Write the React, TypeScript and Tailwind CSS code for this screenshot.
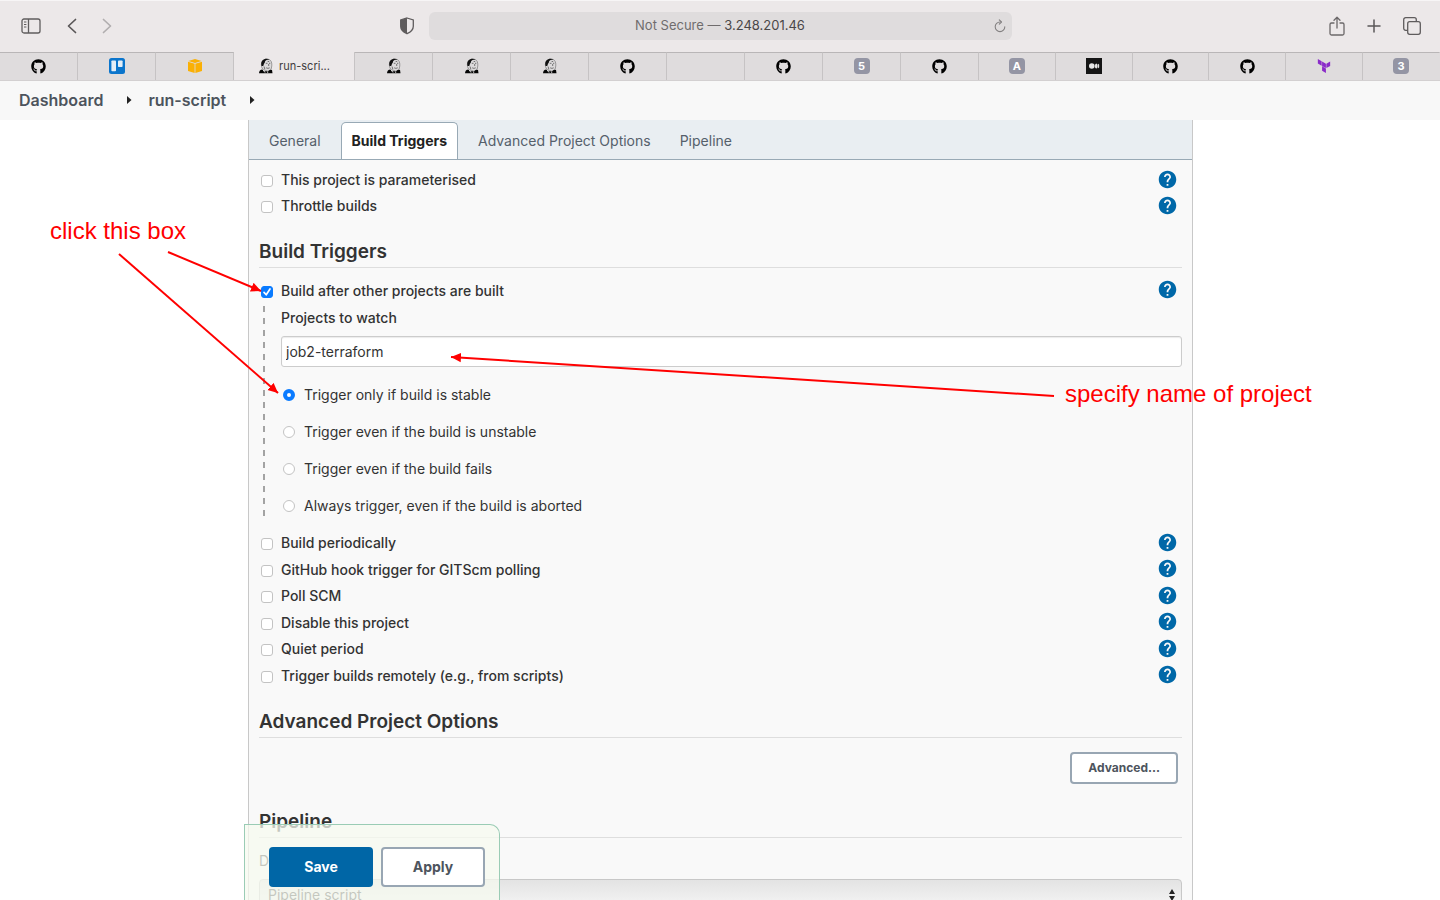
import type { ReactNode } from 'react';
import { FaGithub } from 'react-icons/fa';
import { MdHelp } from 'react-icons/md';
import { SiTerraform } from 'react-icons/si';

/* ---------- Browser icons ---------- */

function SidebarIcon() {
  return (
    <svg width="20" height="16" viewBox="0 0 20 16" fill="none" stroke="#5f5c5d" strokeWidth="1.3">
      <rect x="1" y="1" width="18" height="14" rx="2" />
      <path d="M7.5 1v14" />
      <path d="M3 4h2.4M3 6.5h2.4M3 9h2.4" strokeWidth="1" />
    </svg>
  );
}

function Chevron({ forward = false }: { forward?: boolean }) {
  return (
    <svg width="10" height="16" viewBox="0 0 10 16" fill="none" stroke={forward ? '#b1aeaf' : '#5a5758'} strokeWidth="1.7" strokeLinecap="round" strokeLinejoin="round">
      <path d={forward ? 'M1.5 1.5 8.5 8l-7 6.5' : 'M8.5 1.5 1.5 8l7 6.5'} />
    </svg>
  );
}

function ShieldIcon() {
  return (
    <svg width="16" height="18" viewBox="0 0 16 18" fill="none">
      <path d="M8 1 14.3 3v6.3c0 3.6-2.8 5.9-6.3 7.4-3.5-1.5-6.3-3.8-6.3-7.4V3L8 1Z" stroke="#5f5c5d" strokeWidth="1.3" />
      <path d="M8 1 1.7 3v6.3c0 3.6 2.8 5.9 6.3 7.4V1Z" fill="#5f5c5d" />
    </svg>
  );
}

function ReloadIcon() {
  return (
    <svg width="12" height="14" viewBox="0 0 12 14" fill="none" stroke="#838081" strokeWidth="1.1" strokeLinecap="round" strokeLinejoin="round">
      <path d="M6.8 3H6a4.8 4.8 0 1 0 4.8 4.8" />
      <path d="M5.3.8 7.5 3 5.3 5.2" />
    </svg>
  );
}

function ShareIcon() {
  return (
    <svg width="16" height="20" viewBox="0 0 16 20" fill="none" stroke="#6b6869" strokeWidth="1.3" strokeLinecap="round" strokeLinejoin="round">
      <path d="M5 7H2.5A1.5 1.5 0 0 0 1 8.5v9A1.5 1.5 0 0 0 2.5 19h11a1.5 1.5 0 0 0 1.5-1.5v-9A1.5 1.5 0 0 0 13.5 7H11" />
      <path d="M8 12V1.5M5 4.3l3-3 3 3" />
    </svg>
  );
}

function PlusIcon() {
  return (
    <svg width="14" height="14" viewBox="0 0 14 14" fill="none" stroke="#5a5758" strokeWidth="1.5" strokeLinecap="round">
      <path d="M7 1v12M1 7h12" />
    </svg>
  );
}

function OverviewIcon() {
  return (
    <svg width="18" height="18" viewBox="0 0 18 18" fill="none" stroke="#5f5c5d" strokeWidth="1.3">
      <rect x="4.7" y="4.7" width="12.6" height="12.6" rx="2" />
      <path d="M4.7 13.3h-2a2 2 0 0 1-2-2V2.7a2 2 0 0 1 2-2h8.6a2 2 0 0 1 2 2v2" />
    </svg>
  );
}

/* ---------- Favicons ---------- */

function Trello() {
  return (
    <svg width="16" height="16" viewBox="0 0 16 16">
      <rect width="16" height="16" rx="2.5" fill="#0b75cc" />
      <rect x="2.4" y="2.4" width="4.6" height="10.8" rx="0.8" fill="#e4eef7" />
      <rect x="9" y="2.4" width="4.6" height="6.6" rx="0.8" fill="#e4eef7" />
    </svg>
  );
}

function Cube() {
  return (
    <svg width="16" height="16" viewBox="0 0 16 16" fill="#fab005">
      <path d="M8 1 14.6 3 8 5 1.4 3Z" />
      <path d="M1 3.7 7.6 5.7V15L1 13Z" />
      <path d="M15 3.7 8.4 5.7V15l6.6-2Z" />
    </svg>
  );
}

function Jenkins() {
  return (
    <svg width="16" height="16" viewBox="0 0 16 16">
      <path d="M4.5 11C2.8 8 3 4.5 5 2.6 7.5.4 12 .7 13.2 3.5c.9 2 .8 5-.1 7.5l-2.800 2.500Z" fill="#dcdadb" stroke="#666" strokeWidth=".6" />
      <path d="M3.6 8C2.700 5 3.600 2 6.300 1.200c2-.7 4-.4 5.200.6-2-.2-3.400.2-4.200 1.200-.5.700-.2 1.600-.9 2.200-.8.600-.5 1.800-1.200 2.800Z" fill="#111" />
      <path d="M7.800 5.300h1.700M11 5.300h1.300M10.700 6v2M8.200 9.800c1.200.7 2.400.6 3.500 0M6 8.500l.8 2.500M9.600 3.400l1.600.2" fill="none" stroke="#444" strokeWidth=".7" />
      <path d="M1 15.300c.2-2.300 1.200-3.600 3.400-3.800l2.400 1.700 1.900.1 1.300.3 1-1.400 3-.4.5 3.500Z" fill="#050505" />
      <path d="M4.800 11.500 7 14.500M9.700 13.600v1.300" stroke="#eee" strokeWidth=".9" />
    </svg>
  );
}

function Medium() {
  return (
    <svg width="16" height="16" viewBox="0 0 16 16">
      <rect width="16" height="16" fill="#151515" />
      <circle cx="5.8" cy="8" r="2.8" fill="#e8e8e8" />
      <ellipse cx="10.3" cy="8" rx="1.4" ry="2.6" fill="#e8e8e8" />
      <ellipse cx="12.6" cy="8" rx=".6" ry="2.3" fill="#e8e8e8" />
    </svg>
  );
}

function Letter({ children }: { children: string }) {
  return (
    <span className="flex size-4 items-center justify-center rounded bg-[#9495a4] text-[11px] leading-none font-bold text-white">
      {children}
    </span>
  );
}

const github = <FaGithub size={15} color="#000" />;

const leadingTabs: ReactNode[] = [github, <Trello />, <Cube />];
const middleTabs: ReactNode[] = [
  <Jenkins />,
  <Jenkins />,
  <Jenkins />,
  github,
  null,
  github,
  <Letter>5</Letter>,
  github,
];
const trailingTabs: ReactNode[] = [
  <Letter>A</Letter>,
  <Medium />,
  github,
  github,
  <SiTerraform size={14} color="#8a2bc9" />,
  <Letter>3</Letter>,
];

const tabBase = 'flex items-center justify-center border-t border-r border-t-[#b9b6b7] border-r-[#c6c3c4] bg-[#dfdcdd] pb-px';

function Browser() {
  return (
    <header className="shrink-0">
      <div className="flex h-13 items-center border-t border-[#f7f5f6] bg-[#ece8e9] pb-px">
        <div className="flex flex-1 items-center pr-[14px] pl-[21px]">
          <button aria-label="Sidebar"><SidebarIcon /></button>
          <button aria-label="Back" className="ml-[26px]"><Chevron /></button>
          <button aria-label="Forward" className="ml-[25px]"><Chevron forward /></button>
          <button aria-label="Privacy report" className="ml-auto"><ShieldIcon /></button>
        </div>
        <div className="flex h-7 w-[583px] items-center rounded-md bg-[#dfdcdd] px-[6px]">
          <span className="w-3" />
          <p className="flex-1 text-center text-[13px] text-[#6f6c6d]">
            Not Secure — <span className="text-[#4a4748]">3.248.201.46</span>
          </p>
          <button aria-label="Reload"><ReloadIcon /></button>
        </div>
        <div className="flex flex-1 items-center justify-end pr-[19px] pl-4">
          <button aria-label="Share"><ShareIcon /></button>
          <button aria-label="New tab" className="ml-[22px]"><PlusIcon /></button>
          <button aria-label="Tab overview" className="ml-[22px]"><OverviewIcon /></button>
        </div>
      </div>
      <ul className="flex h-[29px] border-b border-[#d3d0d1]">
        {leadingTabs.map((icon, i) => (
          <li key={i} className={`${tabBase} w-[78px] shrink-0`}>{icon}</li>
        ))}
        <li className="flex w-[121px] shrink-0 items-center justify-center gap-[5px] border-r border-[#c6c3c4] bg-[#ece8e9] text-[11px] text-[#3f3c3d]">
          <Jenkins />
          run-scri...
        </li>
        {middleTabs.map((icon, i) => (
          <li key={i} className={`${tabBase} w-[78px] shrink-0`}>{icon}</li>
        ))}
        {trailingTabs.map((icon, i) => (
          <li key={i} className={`${tabBase} flex-1 last:border-r-[#dfdcdd]`}>{icon}</li>
        ))}
      </ul>
    </header>
  );
}

/* ---------- Form parts ---------- */

function Crumb({ children }: { children: string }) {
  return (
    <li className="flex items-center">
      <a href="#" className="text-base font-semibold text-[#4d545d]">{children}</a>
      <svg className="mr-4 ml-6" width="5" height="8" viewBox="0 0 5 8" fill="#222">
        <path d="M0 0 4.5 4 0 8Z" />
      </svg>
    </li>
  );
}

function Help({ topic }: { topic: string }) {
  return (
    <button type="button" aria-label={`Help for ${topic}`} className="mr-1 mb-1 text-[#0068a8]">
      <MdHelp size={21} />
    </button>
  );
}

function CheckRow({ label, checked = false }: { label: string; checked?: boolean }) {
  return (
    <div className="flex items-center justify-between">
      <label className="flex items-center gap-2 pl-[2px] text-sm font-medium text-[#333]">
        <span className="grid size-3 place-items-center">
          <input
            type="checkbox"
            defaultChecked={checked}
            className="peer col-start-1 row-start-1 size-3 appearance-none rounded-[3px] border border-[#c3c3c3] bg-white checked:border-[#0a7bff] checked:bg-[#0a7bff]"
          />
          <svg className="pointer-events-none col-start-1 row-start-1 hidden peer-checked:block" width="10" height="10" viewBox="0 0 10 10" fill="none" stroke="#fff" strokeWidth="1.7" strokeLinecap="round" strokeLinejoin="round">
            <path d="M2 5.4 4.2 7.8 8 2" />
          </svg>
        </span>
        <span className="pb-[2px]">{label}</span>
      </label>
      <Help topic={label} />
    </div>
  );
}

function SectionTitle({ children }: { children: string }) {
  return (
    <h2 className="mt-4 h-8 border-b border-[#dedede] text-[19px] leading-8 font-semibold text-[#333]">{children}</h2>
  );
}

const radios = [
  'Trigger only if build is stable',
  'Trigger even if the build is unstable',
  'Trigger even if the build fails',
  'Always trigger, even if the build is aborted',
];

const triggers = [
  'Build periodically',
  'GitHub hook trigger for GITScm polling',
  'Poll SCM',
  'Disable this project',
  'Quiet period',
  'Trigger builds remotely (e.g., from scripts)',
];

function ConfigForm() {
  return (
    <form className="flex-1 px-[10px] pt-2">
      <div className="grid h-13 auto-rows-fr">
        <CheckRow label="This project is parameterised" />
        <CheckRow label="Throttle builds" />
      </div>

      <SectionTitle>Build Triggers</SectionTitle>
      <div className="mt-[10px] grid h-[27px]">
        <CheckRow label="Build after other projects are built" checked />
      </div>
      <div className="flex pl-1">
        <div className="mt-px mb-[7px] w-[2px] bg-[repeating-linear-gradient(to_bottom,#a3a3a3_0_6px,transparent_6px_12px)]" />
        <div className="flex-1 pl-4">
          <label htmlFor="watch" className="block h-[31px] text-sm leading-[26px] font-medium text-[#333]">
            Projects to watch
          </label>
          <input
            id="watch"
            defaultValue="job2-terraform"
            className="mb-[9px] block h-[31px] w-full rounded-[3px] border border-[#ccc] bg-white px-1 text-sm text-[#333] shadow-[inset_0_1px_1px_rgba(0,0,0,0.08)]"
          />
          {radios.map((label, i) => (
            <label key={label} className="flex h-[37px] items-center gap-[9px] pl-[2px] text-sm text-[#333]">
              <input
                type="radio"
                name="threshold"
                defaultChecked={i === 0}
                className="size-3 appearance-none rounded-full border border-[#c3c3c3] bg-white checked:border-4 checked:border-[#0a7bff]"
              />
              {label}
            </label>
          ))}
        </div>
      </div>
      <div className="mt-[7px] grid h-[159px] auto-rows-fr">
        {triggers.map((label) => (
          <CheckRow key={label} label={label} />
        ))}
      </div>

      <SectionTitle>Advanced Project Options</SectionTitle>
      <div className="flex justify-end pt-[14px] pr-1 pb-[6px]">
        <button type="button" className="h-8 rounded border-2 border-[#98a6b3] bg-white px-4 text-xs font-bold text-[#4d545d]">
          Advanced...
        </button>
      </div>

      <SectionTitle>Pipeline</SectionTitle>
      <label htmlFor="definition" className="mt-[10px] block h-[31px] text-sm leading-[26px] text-[#333]">
        Definition
      </label>
      <div className="grid">
        <select
          id="definition"
          className="col-start-1 row-start-1 h-[31px] appearance-none rounded border border-[#c8c8c8] bg-linear-to-b from-[#e3e3e3] to-[#f6f6f6] px-2 text-sm text-[#333]"
        >
          <option>Pipeline script</option>
        </select>
        <svg className="pointer-events-none col-start-1 row-start-1 mr-[7px] self-center justify-self-end" width="6" height="12" viewBox="0 0 6 12" fill="#222">
          <path d="M3 0 6 5H0ZM3 12 0 7h6Z" />
        </svg>
      </div>
    </form>
  );
}

/* ---------- Red notes laid over the page ---------- */

function Annotations() {
  return (
    <div className="pointer-events-none absolute inset-0 font-['Liberation_Sans',sans-serif] text-2xl leading-7 text-[#f00]">
      <svg className="absolute inset-0 size-full" fill="none" stroke="#f00" strokeWidth="2">
        <defs>
          <marker id="head" markerUnits="userSpaceOnUse" markerWidth="12" markerHeight="12" refX="10" refY="5" orient="auto">
            <path d="M0 .3 10 5 0 9.7Z" fill="#f00" stroke="none" />
          </marker>
        </defs>
        <path d="M168 252 261 291" markerEnd="url(#head)" />
        <path d="M119 254 278 393" markerEnd="url(#head)" />
        <path d="M1054 396 451 357" markerEnd="url(#head)" />
      </svg>
      <p className="absolute top-[217px] left-[50px] whitespace-nowrap">click this box</p>
      <p className="absolute top-[380px] left-[1065px] whitespace-nowrap">specify name of project</p>
    </div>
  );
}

const inactiveTab = 'px-5 text-[#55606b]';

export default function App() {
  return (
    <div className="relative flex h-screen flex-col overflow-hidden bg-white font-['Inter',sans-serif]">
      <Browser />
      <nav className="h-[39px] shrink-0 bg-[#f8f8f8] pb-px pl-[19px]">
        <ol className="flex h-full items-center">
          <Crumb>Dashboard</Crumb>
          <Crumb>run-script</Crumb>
        </ol>
      </nav>
      <main className="flex min-h-0 flex-1 overflow-hidden pr-[247px] pl-62">
        <div className="flex h-max min-h-full flex-1 flex-col border-x border-[#c8c8c8] bg-[#f9f9f9]">
          <nav className="flex h-10 shrink-0 items-stretch border-b border-[#98a9b5] bg-[#e9eef2] pt-[2px] text-sm">
            <button className={inactiveTab}>General</button>
            <button className="rounded-t-[5px] border border-b-0 border-[#98a9b5] bg-white px-[10px] font-bold text-[#222]">
              Build Triggers
            </button>
            <button className={inactiveTab}>Advanced Project Options</button>
            <button className="px-[9px] text-[#55606b]">Pipeline</button>
          </nav>
          <ConfigForm />
        </div>
      </main>
      <div className="absolute bottom-0 left-61 flex h-19 w-64 gap-2 rounded-tr-[10px] border border-b-0 border-[#9accb5] bg-[#f5f9ef]/75 pt-[22px] pl-6">
        <button className="h-10 w-26 rounded bg-[#0066a6] text-sm font-bold text-white">Save</button>
        <button className="h-10 w-26 rounded border-2 border-[#98a6b3] bg-white text-sm font-bold text-[#4d545d]">Apply</button>
      </div>
      <Annotations />
    </div>
  );
}
